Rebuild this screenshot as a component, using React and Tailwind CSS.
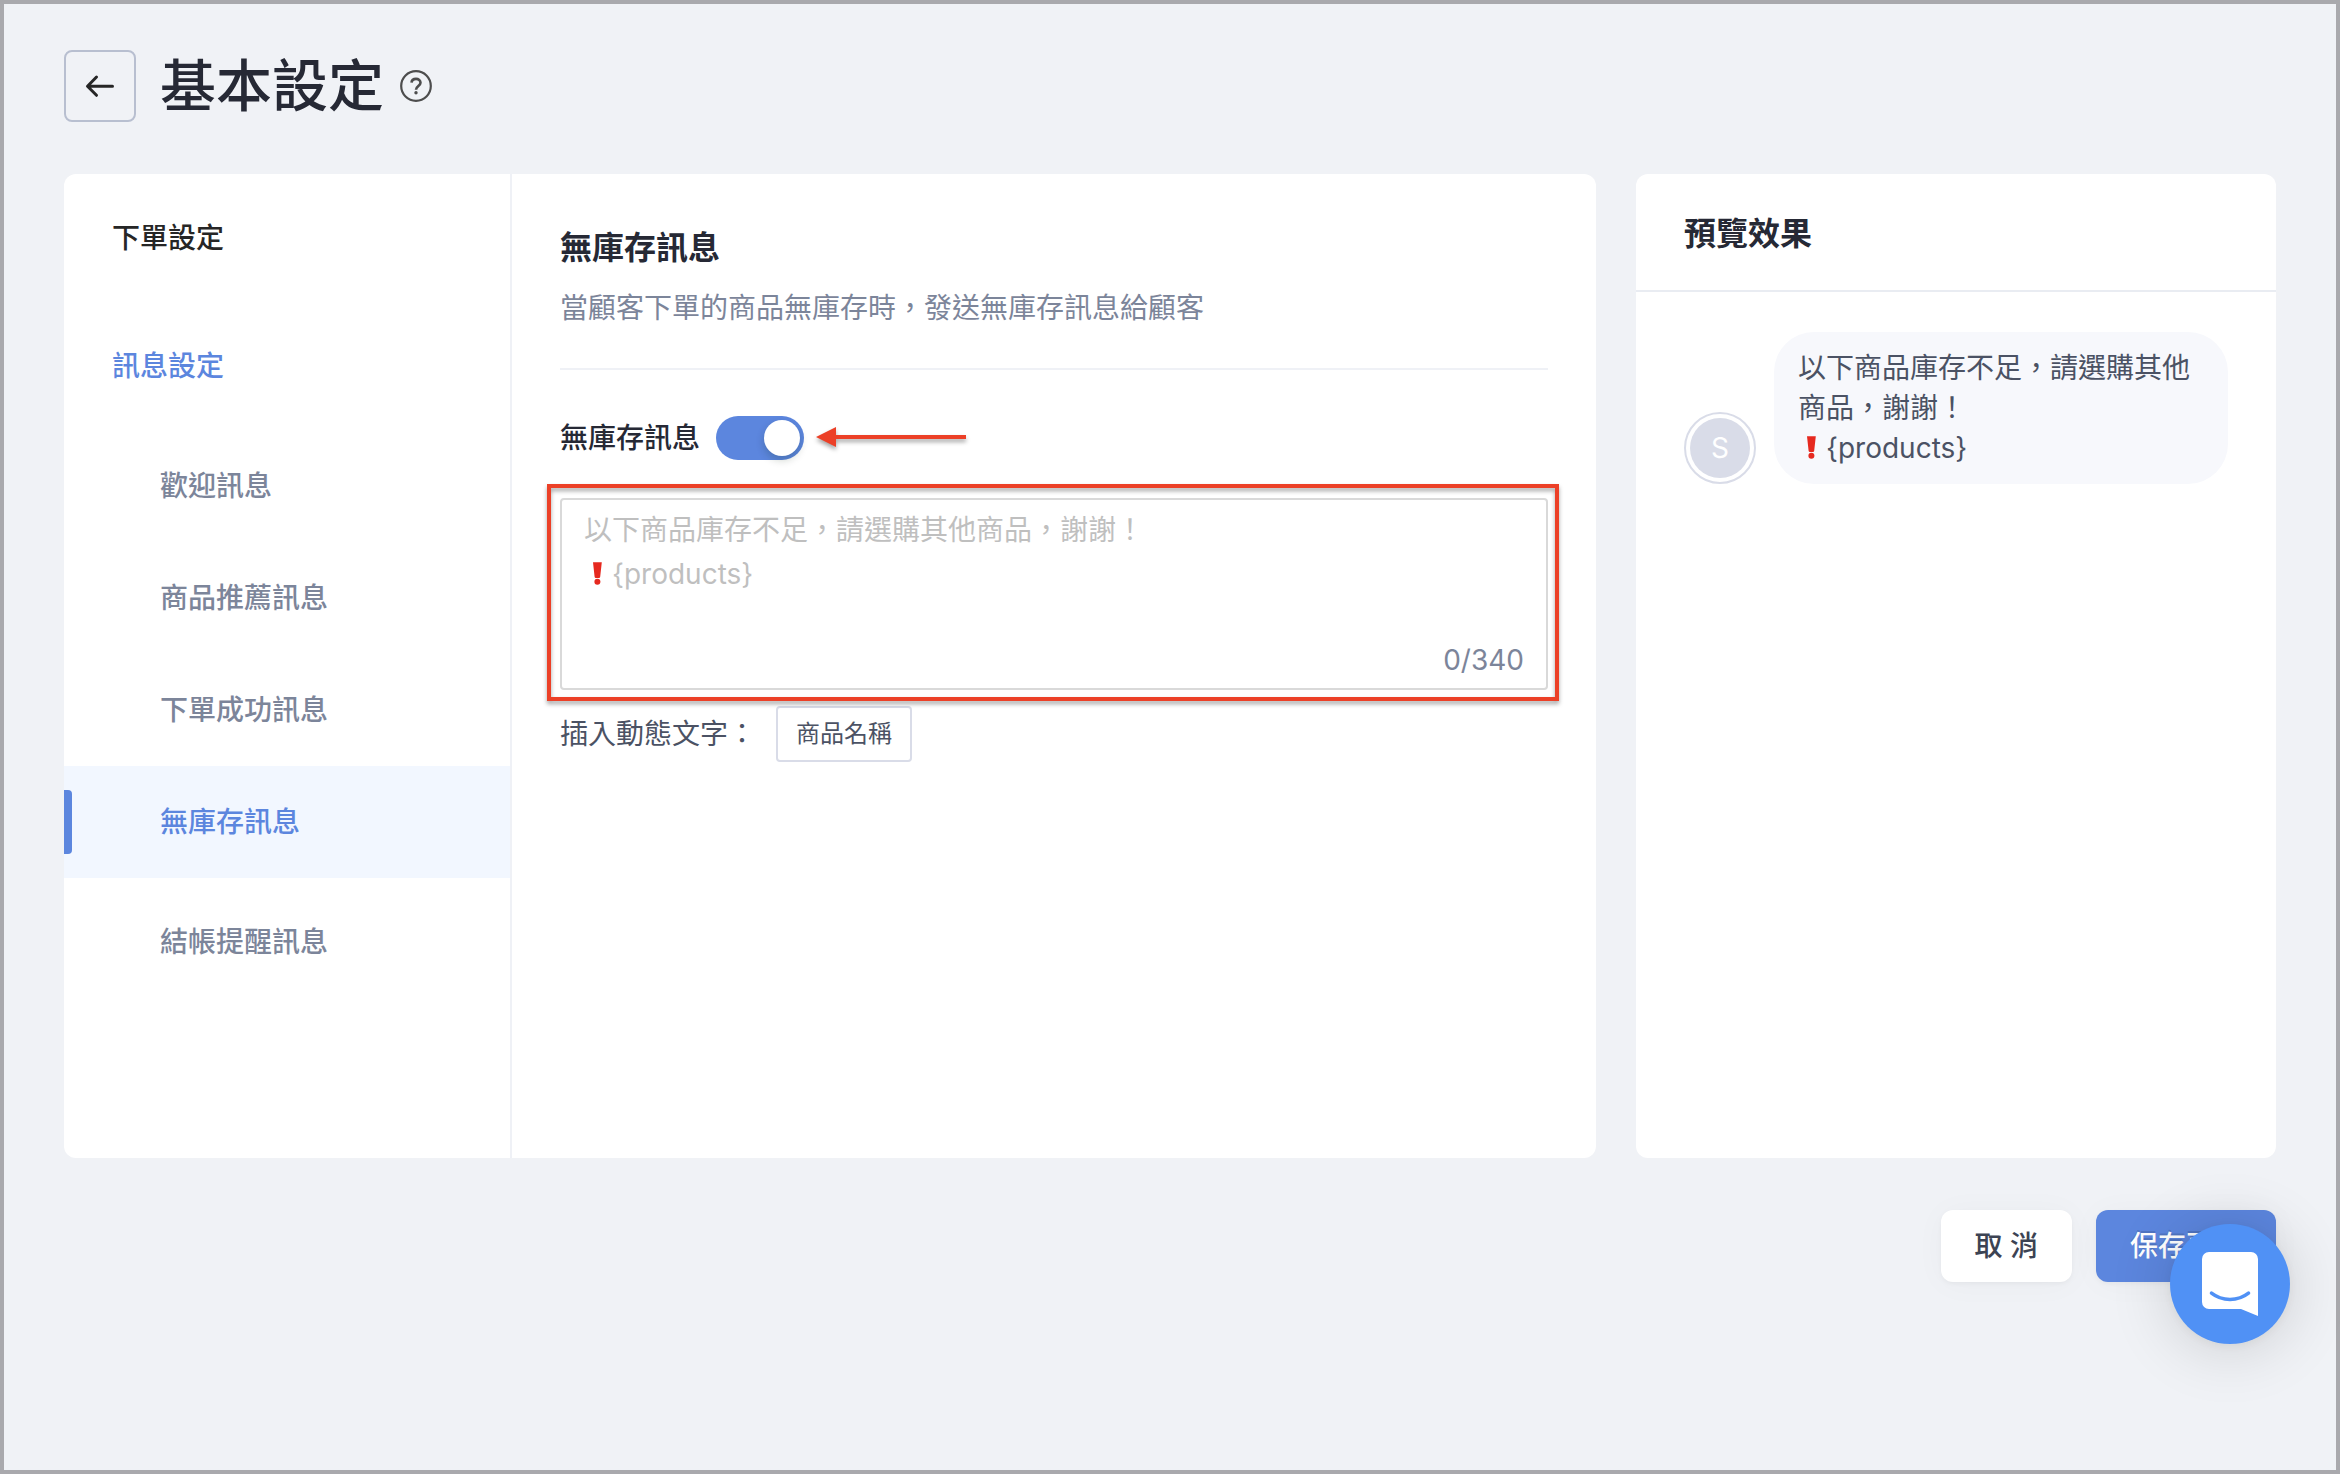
import React, { useState } from 'react';

const menuItems = ['歡迎訊息', '商品推薦訊息', '下單成功訊息', '無庫存訊息', '結帳提醒訊息'];

const MAX_LENGTH = 340;

const ExclamationMark = () => (
    <svg role="img" aria-label="❗" viewBox="0 0 28 28" className="inline-block w-7 h-7 align-middle">
        <path d="M9 .2h8.800l-1.600 14.600q-.1 1.200-1.300 1.200h-3q-1.200 0-1.300-1.200z" fill="#e6291f" />
        <circle cx="13.400" cy="19.800" r="3" fill="#e6291f" />
    </svg>
);

const DefaultMessage = () => (
    <>
        以下商品庫存不足，請選購其他商品，謝謝！
        <br />
        <ExclamationMark />
        {'{products}'}
    </>
);

const PageHeader = () => (
    <header className="flex items-center">
        <button
            type="button"
            aria-label="返回"
            className="flex items-center justify-center w-[72px] h-[72px] border-2 border-[#b8bfd0] rounded-lg"
        >
            <svg viewBox="0 0 32 32" className="w-8 h-8" fill="none" stroke="#262626" strokeWidth="3" strokeLinecap="round" strokeLinejoin="round">
                <path d="M12.500 7 3.500 16.300l9 9M4 16.300h24.500" />
            </svg>
        </button>
        <h1 className="ml-6 text-[56px] leading-[72px] font-medium text-[#262935]">基本設定</h1>
        <button type="button" aria-label="說明" className="ml-4">
            <svg viewBox="0 0 32 32" className="w-8 h-8" fill="none" stroke="#4d4d4d" strokeWidth="2.200">
                <circle cx="16" cy="16" r="14.800" />
                <path d="M11.500 12.600c.2-2.200 2-3.700 4.500-3.700 2.600 0 4.500 1.600 4.500 3.800 0 3.200-4.500 3.400-4.500 7" strokeWidth="2.600" />
                <circle cx="16" cy="22.800" r="1.700" fill="#4d4d4d" stroke="none" />
            </svg>
        </button>
    </header>
);

const Sidebar = ({ active, onSelect }) => (
    <nav className="w-[448px] shrink-0 py-2 border-r-2 border-[#eff1f6] font-medium">
        <a href="#order" className="flex items-center h-28 px-12 text-[#262626]">下單設定</a>
        <a href="#message" className="flex items-center h-28 mt-4 mb-2 px-12 text-[#5c86de]">訊息設定</a>
        {menuItems.map((item) => (
            <a
                key={item}
                href={`#${item}`}
                onClick={() => onSelect(item)}
                className={
                    item === active
                        ? 'flex items-center h-28 mb-2 bg-[#f2f7ff] text-[#5c86de]'
                        : 'flex items-center h-28 text-[#7c859a]'
                }
            >
                <span className={item === active ? 'w-2 h-16 rounded-r bg-[#5c86de]' : 'w-2 h-16'} />
                <span className="pl-[88px]">{item}</span>
            </a>
        ))}
    </nav>
);

const MessageForm = () => {
    const [enabled, setEnabled] = useState(true);
    const [message, setMessage] = useState('');

    return (
        <section className="flex-1 min-w-0 px-12 pt-[50px] pb-12">
            <h2 className="text-[32px] leading-[48px] font-bold text-[#262935]">無庫存訊息</h2>
            <p className="mt-3 leading-[48px] text-[#7c859a]">當顧客下單的商品無庫存時，發送無庫存訊息給顧客</p>
            <hr className="mt-9 border-t-2 border-[#eff1f6]" />

            <div className="flex items-center mt-11">
                <label htmlFor="out-of-stock" className="leading-[48px] font-medium text-[#262935]">無庫存訊息</label>
                <span className="relative flex ml-4 w-[88px] h-11">
                    <input
                        id="out-of-stock"
                        type="checkbox"
                        role="switch"
                        checked={enabled}
                        onChange={(e) => setEnabled(e.target.checked)}
                        className="peer appearance-none w-full h-full rounded-full bg-[#bfbfbf] checked:bg-[#5c86de]"
                    />
                    <span className="absolute top-1 left-1 w-9 h-9 rounded-full bg-white shadow-[0_4px_8px_rgba(0,35,11,0.2)] pointer-events-none peer-checked:left-12" />
                </span>
                <svg viewBox="0 0 152 28" className="ml-3 w-[152px] h-7 drop-shadow-[0_3px_2px_rgba(0,0,0,0.35)]" fill="#ec4027">
                    <path d="M0 13 20 3v8h130v4H20v8z" />
                </svg>
            </div>

            <div className="relative mt-9">
                <textarea
                    aria-label="無庫存訊息內容"
                    value={message}
                    maxLength={MAX_LENGTH}
                    onChange={(e) => setMessage(e.target.value)}
                    className="block w-full h-48 px-[22px] py-2 leading-[44px] text-[#262935] border-2 border-[#d9d9d9] rounded resize-none"
                />
                {!message && (
                    <p className="absolute top-2.5 left-6 leading-[44px] text-[#bfbfbf] pointer-events-none">
                        <DefaultMessage />
                    </p>
                )}
                <span className="absolute right-6 bottom-2 leading-[44px] text-[#7c859a]">
                    {message.length}/{MAX_LENGTH}
                </span>
                <div className="absolute -left-[13px] -right-[11px] -top-3.5 -bottom-[11px] border-4 border-[#ec4027] pointer-events-none drop-shadow-[0_3px_2px_rgba(0,0,0,0.35)]" />
            </div>

            <div className="flex items-center mt-4 text-[#4b5264]">
                <span className="w-[216px]">插入動態文字：</span>
                <button type="button" className="h-14 px-[18px] text-2xl border-2 border-[#d9dce8] rounded">商品名稱</button>
            </div>
        </section>
    );
};

const Preview = () => (
    <aside className="w-[640px] shrink-0 bg-white rounded-xl">
        <h2 className="px-12 pt-9 pb-8 text-[32px] leading-[48px] font-bold text-[#262935] border-b-2 border-[#e9ecf2]">預覽效果</h2>
        <div className="flex items-end gap-[18px] px-12 pt-10">
            <div className="w-[72px] h-[72px] p-1 shrink-0 rounded-full border-2 border-[#d9dce8]">
                <div className="flex items-center justify-center w-full h-full rounded-full bg-[#d9dce8] text-white">S</div>
            </div>
            <p className="flex-1 px-6 py-4 leading-10 rounded-[40px] bg-[#f7f8fc] text-[#4b5264]">
                <DefaultMessage />
            </p>
        </div>
    </aside>
);

const ChatLauncher = () => (
    <button
        type="button"
        aria-label="開啟聊天"
        className="fixed right-[50px] bottom-[130px] flex items-center justify-center w-[120px] h-[120px] rounded-full bg-[#5091f5] shadow-[0_2px_12px_rgba(0,0,0,0.06),0_4px_64px_rgba(0,0,0,0.16)]"
    >
        <svg viewBox="0 0 56 64" className="w-14 h-16">
            <path d="M7 0h42a7 7 0 0 1 7 7v57l-17-7H7a7 7 0 0 1-7-7V7a7 7 0 0 1 7-7z" fill="#fff" />
            <path d="M9.500 41.200c10.500 8.300 26.500 8.300 37 0" fill="none" stroke="#5091f5" strokeWidth="3.600" strokeLinecap="round" />
        </svg>
    </button>
);

const App = () => {
    const [active, setActive] = useState('無庫存訊息');

    return (
        <div className="min-h-screen border-4 border-[#a9a9ad] bg-[#f0f2f6] px-[60px] pt-[46px] pb-12 font-['Inter','Noto_Sans_CJK_TC',sans-serif] text-[28px]">
            <PageHeader />

            <main className="flex gap-10 mt-[52px]">
                <div className="flex flex-1 min-w-0 min-h-[984px] bg-white rounded-xl">
                    <Sidebar active={active} onSelect={setActive} />
                    <MessageForm />
                </div>
                <Preview />
            </main>

            <footer className="flex justify-end gap-6 mt-[52px] font-medium">
                <button type="button" className="h-[72px] px-[34px] rounded-xl bg-white text-[#3c4353] shadow-[0_2px_4px_rgba(0,0,0,0.04),0_2px_32px_rgba(0,0,0,0.03)]">
                    取 消
                </button>
                <button type="button" className="h-[72px] px-[34px] rounded-xl bg-[#5c86de] text-white text-shadow-[0_-2px_0_rgba(0,0,0,0.12)] shadow-[0_2px_4px_rgba(0,0,0,0.04),0_2px_32px_rgba(0,0,0,0.03)]">
                    保存更改
                </button>
            </footer>

            <ChatLauncher />
        </div>
    );
};

export default App;
